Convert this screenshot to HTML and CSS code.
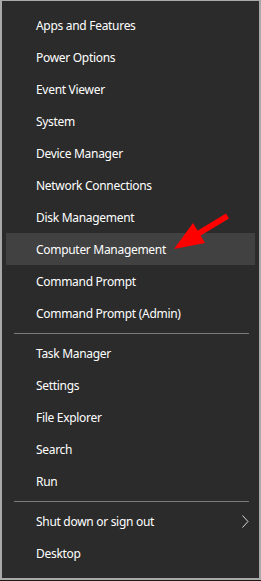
FILE: index.html
```html
<!DOCTYPE html>
<html>
<head>
<meta charset="utf-8">
<link rel="stylesheet" href="styles.css">
</head>
<body>
<div class="menu">
  <div class="group">
    <div class="item">Apps and Features</div>
    <div class="item">Power Options</div>
    <div class="item">Event Viewer</div>
    <div class="item">System</div>
    <div class="item">Device Manager</div>
    <div class="item">Network Connections</div>
    <div class="item">Disk Management</div>
    <div class="item active">Computer Management</div>
    <div class="item">Command Prompt</div>
    <div class="item">Command Prompt (Admin)</div>
  </div>
  <div class="sep"></div>
  <div class="group">
    <div class="item">Task Manager</div>
    <div class="item">Settings</div>
    <div class="item">File Explorer</div>
    <div class="item">Search</div>
    <div class="item">Run</div>
  </div>
  <div class="sep"></div>
  <div class="group">
    <div class="item sub">Shut down or sign out
      <svg class="chev" width="7" height="13" viewBox="0 0 7 13"><path d="M0.5 0.5 L6 6.5 L0.5 12.5" fill="none" stroke="#d8d8d8" stroke-width="1"/></svg>
    </div>
    <div class="item">Desktop</div>
  </div>
  <svg class="arrow" width="60" height="40" viewBox="0 0 60 40"><path d="M2 36 L21 10 L33 30 Z M22.5 19.5 L54 0.5 L57 5.5 L25.5 24.5 Z" fill="#ff0000"/></svg>
</div>
<div class="taskbar"></div>
</body>
</html>
```
FILE: styles.css
```css
html, body {
  margin: 0;
  padding: 0;
  background: #2b2b2b;
}
body {
  width: 261px;
  height: 581px;
  overflow: hidden;
  font-family: "Noto Sans", "Open Sans", sans-serif;
}
.menu {
  position: relative;
  box-sizing: border-box;
  width: 261px;
  height: 580px;
  background: #2b2b2b;
  border: 2px solid #a9a9a9;
  border-top-width: 1px;
  border-bottom-width: 2px;
  padding: 8px 2px 0 2px;
}
.taskbar {
  height: 1px;
  background: #1f1a18;
}
.item {
  box-sizing: border-box;
  height: 32px;
  display: flex;
  align-items: center;
  padding-left: 30px;
  padding-right: 6px;
  padding-top: 1px;
  margin: 0 2px;
  color: #ffffff;
  font-size: 12px;
  letter-spacing: -0.3px;
  line-height: 16px;
  white-space: nowrap;
}
.item.active {
  background: #414141;
}
.item.sub {
  justify-content: space-between;
}
.chev {
  display: block;
}
.sep {
  height: 1px;
  background: #7a7a7a;
  margin: 4px 8px 3px 10px;
}
.arrow {
  position: absolute;
  left: 170px;
  top: 212px;
}
```
